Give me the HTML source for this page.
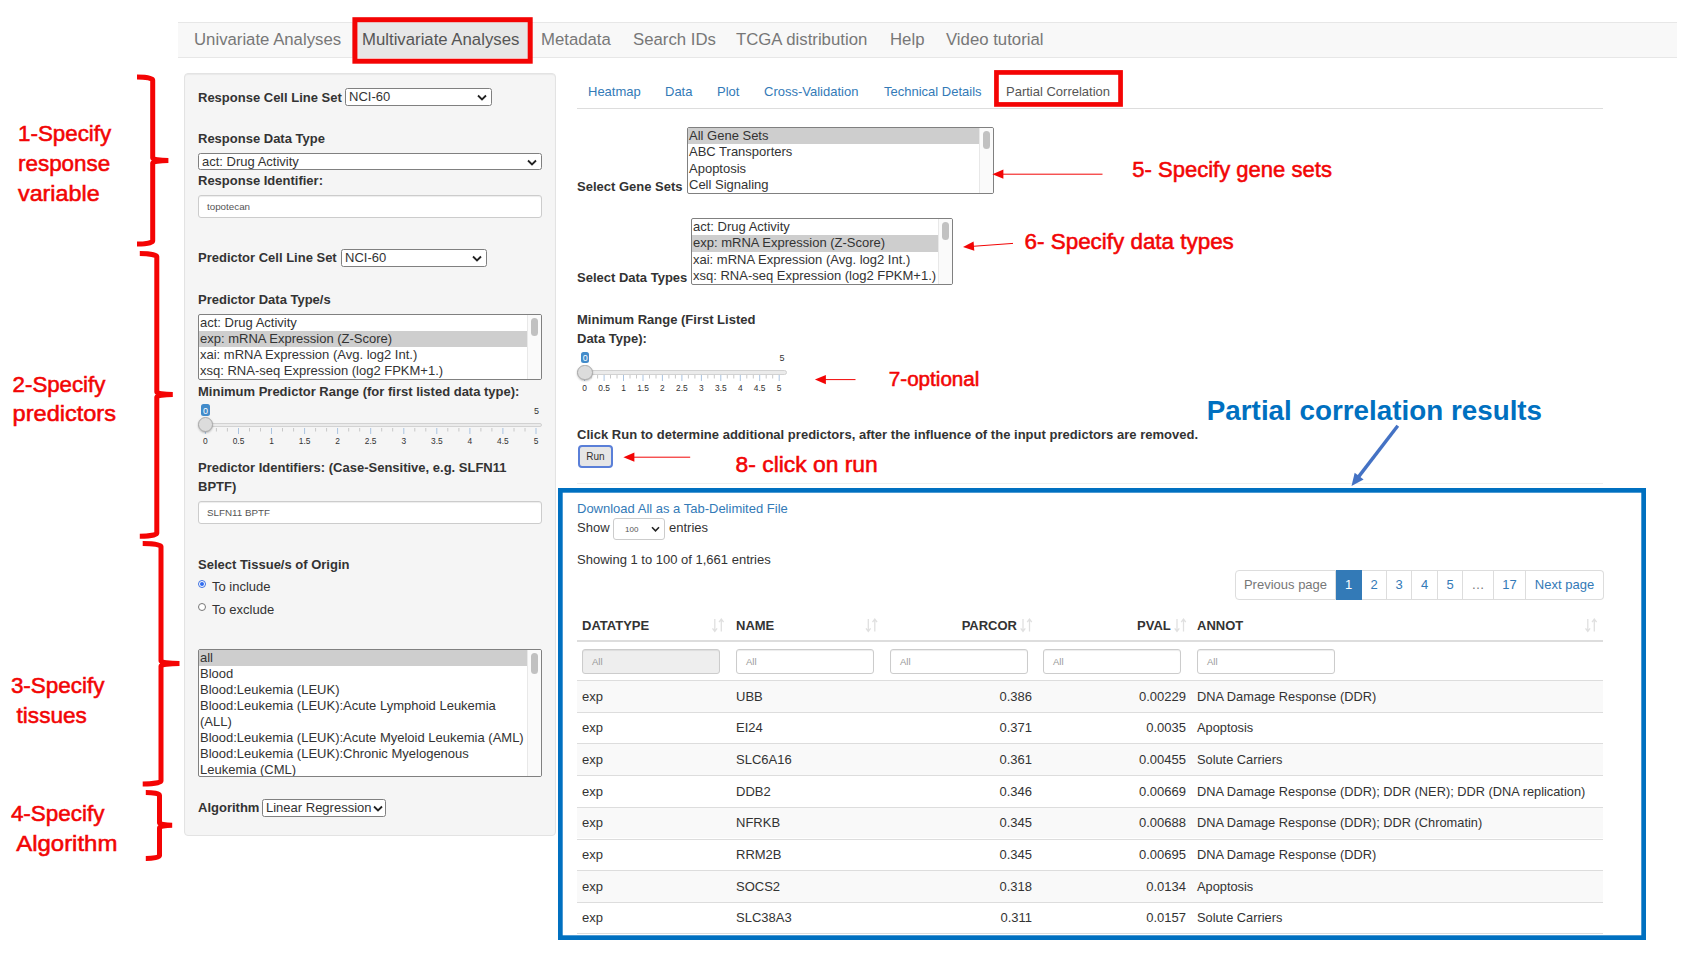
<!DOCTYPE html>
<html lang="en">
<head>
<meta charset="utf-8">
<title>Multivariate Analyses - Partial Correlation</title>
<style>
*{box-sizing:border-box;margin:0;padding:0}
html,body{width:1700px;height:956px;overflow:hidden;background:#fff}
body{font-family:"Liberation Sans",Arial,sans-serif;font-size:13px;color:#333;position:relative;line-height:1}
.abs{position:absolute;white-space:nowrap}
.b{font-weight:bold}
/* navbar */
#nav{position:absolute;left:178px;top:22px;width:1499px;height:36px;background:#f8f8f8;border-top:1px solid #e7e7e7;border-bottom:1px solid #e7e7e7}
#nav span{position:absolute;top:0;height:34px;line-height:34px;font-size:16.75px;color:#777;white-space:nowrap}
#nav span.act{background:#e7e7e7;color:#555}
.redbox{position:absolute;border:4px solid #e8000d}
/* sidebar */
#well{position:absolute;left:184px;top:73px;width:372px;height:763px;background:#f5f5f5;border:1px solid #e3e3e3;border-radius:4px;box-shadow:inset 0 1px 1px rgba(0,0,0,.05)}
.lbl{position:absolute;font-weight:bold;font-size:13px;color:#333;white-space:nowrap;line-height:16px}
.sel{position:absolute;background:#fff;border:1px solid #808080;border-radius:2.5px;font-size:13px;color:#333;line-height:16px;padding-left:3px;white-space:nowrap}
.sel svg{position:absolute;right:4px;top:5px}
.inp{position:absolute;background:#fff;border:1px solid #ccc;border-radius:3px;font-size:9.8px;color:#555;padding-left:8px;white-space:nowrap;box-shadow:inset 0 1px 1px rgba(0,0,0,.075)}
.list{position:absolute;background:#fff;border:1px solid #808080;border-radius:2px;font-size:13px;color:#333;overflow:hidden}
.list div{padding-left:1px;line-height:16px;white-space:nowrap}
.list div.s{background:#cecece}
.list i{position:absolute;right:0;top:0;bottom:0;width:14px;background:#fafafa;border-left:1px solid #e8e8e8}
.list.tl i:after{height:21px}
.list.ml div{line-height:16.4px}
.list i:after{content:"";position:absolute;left:3px;top:3px;width:7px;height:18px;border-radius:4px;background:#c1c1c1}
/* slider */
.trk{position:absolute;height:4.6px;background:#ebebeb;border:1px solid #d2d2d2;border-radius:3px}
.hnd{position:absolute;z-index:3;width:15.5px;height:15.5px;border-radius:50%;background:#dcdcdc;border:1px solid #ababab;box-shadow:0 1px 2px rgba(0,0,0,.25)}
.sv{position:absolute;background:#428bca;color:#fff;font-size:9px;height:11.5px;line-height:10px;border-radius:2.5px;padding:1.2px 1.7px 0}
.sm{position:absolute;font-size:9px;color:#333;line-height:10px}
.tk{position:absolute;font-size:8.4px;color:#333;line-height:10px;transform:translateX(-50%)}
/* main */
.tab{position:absolute;top:84px;font-size:13px;color:#337ab7;line-height:15px;white-space:nowrap}
.hr{position:absolute;height:1px;background:#e2e2e2}
.t13{position:absolute;font-size:13px;line-height:15px;white-space:nowrap;color:#333}
.lnk{color:#337ab7}
/* table */
.th{position:absolute;top:618px;font-size:13px;font-weight:bold;line-height:15px;color:#333;white-space:nowrap}
.row{position:absolute;left:577px;width:1026px;height:32px;border-top:1px solid #ddd}
.row.o{background:#f9f9f9}
.row span{position:absolute;top:7.6px;font-size:13px;line-height:15px;white-space:nowrap;color:#333}
.row span.r{text-align:right}
.fi{position:absolute;top:649px;height:25px;width:137.5px;background:#fff;border:1px solid #ccc;border-radius:3px;font-size:9.5px;color:#999;line-height:24px;padding-left:9px;box-shadow:inset 0 1px 1px rgba(0,0,0,.075)}
.pg{position:absolute;top:570px;height:29.5px;border:1px solid #ddd;border-left:none;background:#fff;font-size:13px;line-height:28px;color:#337ab7;text-align:center;white-space:nowrap}
svg.ov{position:absolute;left:0;top:0;width:1700px;height:956px;pointer-events:none}
</style>
</head>
<body>

<!-- NAVBAR -->
<div id="nav">
<span style="left:16px">Univariate Analyses</span>
<span class="act" style="left:174px;width:179px;padding-left:10px">Multivariate Analyses</span>
<span style="left:363px">Metadata</span>
<span style="left:455px">Search IDs</span>
<span style="left:558px">TCGA distribution</span>
<span style="left:712px">Help</span>
<span style="left:768px">Video tutorial</span>
</div>

<!-- SIDEBAR -->
<div id="well"></div>
<!--SIDEBAR-CONTENT-->
<div class="lbl" style="left:198px;top:89.5px">Response Cell Line Set</div>
<div class="sel" style="left:345px;top:88px;width:147px;height:18px">NCI-60<svg width="10" height="8" viewBox="0 0 10 8"><path d="M1 1.5 L5 5.5 L9 1.5" fill="none" stroke="#222" stroke-width="1.8"/></svg></div>
<div class="lbl" style="left:198px;top:131px">Response Data Type</div>
<div class="sel" style="left:198px;top:153.3px;width:344px;height:17.2px;line-height:15.4px">act: Drug Activity<svg width="10" height="8" viewBox="0 0 10 8"><path d="M1 1.5 L5 5.5 L9 1.5" fill="none" stroke="#222" stroke-width="1.8"/></svg></div>
<div class="lbl" style="left:198px;top:173px">Response Identifier:</div>
<div class="inp" style="left:198px;top:194.5px;width:344px;height:23.5px;line-height:21.5px">topotecan</div>
<div class="lbl" style="left:198px;top:250px">Predictor Cell Line Set</div>
<div class="sel" style="left:341px;top:249px;width:146px;height:18px">NCI-60<svg width="10" height="8" viewBox="0 0 10 8"><path d="M1 1.5 L5 5.5 L9 1.5" fill="none" stroke="#222" stroke-width="1.8"/></svg></div>
<div class="lbl" style="left:198px;top:292px">Predictor Data Type/s</div>
<div class="list" style="left:198px;top:314px;width:344px;height:66px">
<div>act: Drug Activity</div><div class="s">exp: mRNA Expression (Z-Score)</div><div>xai: mRNA Expression (Avg. log2 Int.)</div><div>xsq: RNA-seq Expression (log2 FPKM+1.)</div><i></i>
</div>
<div class="lbl" style="left:198px;top:384px">Minimum Predictor Range (for first listed data type):</div>
<!-- slider 1 -->
<div class="sv" style="left:201.4px;top:404.4px">0</div>
<div class="sm" style="left:534px;top:406px">5</div>
<div class="trk" style="left:198px;top:422.5px;width:344px"></div>
<div class="hnd" style="left:197.8px;top:416.8px"></div>
<!--TICKS1-->
<div class="lbl" style="left:198px;top:460px">Predictor Identifiers: (Case-Sensitive, e.g. SLFN11</div>
<div class="lbl" style="left:198px;top:479px">BPTF)</div>
<div class="inp" style="left:198px;top:500.5px;width:344px;height:23.5px;line-height:21.5px">SLFN11 BPTF</div>
<div class="lbl" style="left:198px;top:557px">Select Tissue/s of Origin</div>
<div class="abs" style="left:198px;top:580px;width:8px;height:8px;border-radius:50%;border:1px solid #3b6fe0;background:#fff"><div style="position:absolute;left:1px;top:1px;width:4px;height:4px;border-radius:50%;background:#2f6bf0"></div></div>
<div class="t13" style="left:212px;top:579.4px">To include</div>
<div class="abs" style="left:198px;top:603px;width:8px;height:8px;border-radius:50%;border:1px solid #777;background:#fff"></div>
<div class="t13" style="left:212px;top:602.4px">To exclude</div>
<div class="list tl" style="left:198px;top:649px;width:344px;height:128px">
<div class="s">all</div><div>Blood</div><div>Blood:Leukemia (LEUK)</div><div>Blood:Leukemia (LEUK):Acute Lymphoid Leukemia</div><div>(ALL)</div><div>Blood:Leukemia (LEUK):Acute Myeloid Leukemia (AML)</div><div>Blood:Leukemia (LEUK):Chronic Myelogenous</div><div>Leukemia (CML)</div><i></i>
</div>
<div class="lbl" style="left:198px;top:800px">Algorithm</div>
<div class="sel" style="left:262px;top:799px;width:124px;height:18px">Linear Regression<svg width="10" height="8" viewBox="0 0 10 8" style="right:2px"><path d="M1 1.5 L5 5.5 L9 1.5" fill="none" stroke="#222" stroke-width="1.8"/></svg></div>


<!--MAIN-CONTENT-->
<div class="tab" style="left:588px">Heatmap</div>
<div class="tab" style="left:665px">Data</div>
<div class="tab" style="left:717px">Plot</div>
<div class="tab" style="left:764px">Cross-Validation</div>
<div class="tab" style="left:884px">Technical Details</div>
<div class="tab" style="left:1006px;color:#555">Partial Correlation</div>
<div class="hr" style="left:577px;top:107.5px;width:1026px;background:#ddd"></div>
<div class="lbl" style="left:577px;top:179px">Select Gene Sets</div>
<div class="list ml" style="left:687px;top:127px;width:307px;height:67px"><div class="s">All Gene Sets</div><div>ABC Transporters</div><div>Apoptosis</div><div>Cell Signaling</div><i></i></div>
<div class="lbl" style="left:577px;top:270px">Select Data Types</div>
<div class="list ml" style="left:691px;top:218px;width:262px;height:67px"><div>act: Drug Activity</div><div class="s">exp: mRNA Expression (Z-Score)</div><div>xai: mRNA Expression (Avg. log2 Int.)</div><div>xsq: RNA-seq Expression (log2 FPKM+1.)</div><i></i></div>
<div class="lbl" style="left:577px;top:312px">Minimum Range (First Listed</div>
<div class="lbl" style="left:577px;top:331.4px">Data Type):</div>
<!-- slider 2 -->
<div class="sv" style="left:581px;top:351.9px;height:11px">0</div>
<div class="sm" style="left:779.5px;top:353.4px">5</div>
<div class="trk" style="left:577px;top:370.2px;width:210px"></div>
<div class="hnd" style="left:577px;top:364.8px"></div>
<!--TICKS2-->
<div class="lbl" style="left:577px;top:427px;letter-spacing:0.02px">Click Run to determine additional predictors, after the influence of the input predictors are removed.</div>
<div class="abs" style="left:578px;top:445px;width:35px;height:23px;border:2px solid #5a7fd8;border-radius:4px;background:#e6e6e6;font-size:10px;line-height:19px;text-align:center;color:#333">Run</div>
<div class="hr" style="left:577px;top:483px;width:1026px;background:#eee"></div>
<div class="t13 lnk" style="left:577px;top:501px">Download All as a Tab-Delimited File</div>
<div class="t13" style="left:577px;top:520px">Show</div>
<div class="abs" style="left:613px;top:518px;width:52px;height:22px;border:1px solid #ccc;border-radius:3px;background:#fff;font-size:8px;line-height:21px;padding-left:11px;color:#555">100<svg width="9" height="7" viewBox="0 0 10 8" style="position:absolute;right:4px;top:7px"><path d="M1 1.5 L5 5.5 L9 1.5" fill="none" stroke="#222" stroke-width="1.8"/></svg></div>
<div class="t13" style="left:669px;top:520px">entries</div>
<div class="t13" style="left:577px;top:552px">Showing 1 to 100 of 1,661 entries</div>
<div class="pg" style="left:1235px;width:101px;border-left:1px solid #ddd;border-radius:4px 0 0 4px;color:#777;">Previous page</div>
<div class="pg" style="left:1336px;width:26px;background:#337ab7;border-color:#337ab7;color:#fff;">1</div>
<div class="pg" style="left:1362px;width:25px;">2</div>
<div class="pg" style="left:1387px;width:25px;">3</div>
<div class="pg" style="left:1412px;width:26px;">4</div>
<div class="pg" style="left:1438px;width:25px;">5</div>
<div class="pg" style="left:1463px;width:31px;color:#777;">…</div>
<div class="pg" style="left:1494px;width:32px;">17</div>
<div class="pg" style="left:1526px;width:78px;border-radius:0 4px 4px 0;">Next page</div>
<div class="th" style="left:582px">DATATYPE</div>
<div class="th" style="left:736px">NAME</div>
<div class="th" style="left:917px;width:100px;text-align:right">PARCOR</div>
<div class="th" style="left:1070.8px;width:100px;text-align:right">PVAL</div>
<div class="th" style="left:1197px">ANNOT</div>
<div class="hr" style="left:577px;top:640px;width:1026px;height:2px;background:#ddd"></div>
<div class="fi" style="left:582px;background:#eee">All</div>
<div class="fi" style="left:736px">All</div>
<div class="fi" style="left:890px">All</div>
<div class="fi" style="left:1043px">All</div>
<div class="fi" style="left:1197px">All</div>
<div class="row o" style="top:680.0px;height:31.7px"><span style="left:5px">exp</span><span style="left:159px">UBB</span><span class="r" style="left:355px;width:100px">0.386</span><span class="r" style="left:509px;width:100px">0.00229</span><span style="left:620px;font-size:12.8px">DNA Damage Response (DDR)</span></div>
<div class="row" style="top:711.7px;height:31.7px"><span style="left:5px">exp</span><span style="left:159px">EI24</span><span class="r" style="left:355px;width:100px">0.371</span><span class="r" style="left:509px;width:100px">0.0035</span><span style="left:620px;font-size:12.8px">Apoptosis</span></div>
<div class="row o" style="top:743.4px;height:31.7px"><span style="left:5px">exp</span><span style="left:159px">SLC6A16</span><span class="r" style="left:355px;width:100px">0.361</span><span class="r" style="left:509px;width:100px">0.00455</span><span style="left:620px;font-size:12.8px">Solute Carriers</span></div>
<div class="row" style="top:775.1px;height:31.7px"><span style="left:5px">exp</span><span style="left:159px">DDB2</span><span class="r" style="left:355px;width:100px">0.346</span><span class="r" style="left:509px;width:100px">0.00669</span><span style="left:620px;font-size:12.8px">DNA Damage Response (DDR); DDR (NER); DDR (DNA replication)</span></div>
<div class="row o" style="top:806.8px;height:31.7px"><span style="left:5px">exp</span><span style="left:159px">NFRKB</span><span class="r" style="left:355px;width:100px">0.345</span><span class="r" style="left:509px;width:100px">0.00688</span><span style="left:620px;font-size:12.8px">DNA Damage Response (DDR); DDR (Chromatin)</span></div>
<div class="row" style="top:838.5px;height:31.7px"><span style="left:5px">exp</span><span style="left:159px">RRM2B</span><span class="r" style="left:355px;width:100px">0.345</span><span class="r" style="left:509px;width:100px">0.00695</span><span style="left:620px;font-size:12.8px">DNA Damage Response (DDR)</span></div>
<div class="row o" style="top:870.2px;height:31.7px"><span style="left:5px">exp</span><span style="left:159px">SOCS2</span><span class="r" style="left:355px;width:100px">0.318</span><span class="r" style="left:509px;width:100px">0.0134</span><span style="left:620px;font-size:12.8px">Apoptosis</span></div>
<div class="row" style="top:901.9px;height:31.7px"><span style="left:5px">exp</span><span style="left:159px">SLC38A3</span><span class="r" style="left:355px;width:100px">0.311</span><span class="r" style="left:509px;width:100px">0.0157</span><span style="left:620px;font-size:12.8px">Solute Carriers</span></div>
<div class="hr" style="left:577px;top:933.4px;width:1026px;background:#ddd"></div>

<!--OVERLAY-->
<svg class="ov" viewBox="0 0 1700 956">
<g fill="none" stroke="#f40404">
<rect x="354.9" y="19.7" width="175.3" height="41.5" stroke-width="5"/>
<rect x="996.45" y="72.45" width="124.1" height="32" stroke-width="4.7"/>
</g>
<g fill="none" stroke="#f40404" stroke-width="5">
<path d="M137 77 A15.7 3 0 0 1 152.7 80 L152.7 157.9 A15.7 2.6 0 0 0 168.4 160.5 A15.7 2.6 0 0 0 152.7 163.1 L152.7 241 A15.7 3 0 0 1 137 244"/>
<path d="M139.8 253.6 A17.0 3 0 0 1 156.8 256.6 L156.8 391.9 A16.0 2.6 0 0 0 172.8 394.5 A16.0 2.6 0 0 0 156.8 397.1 L156.8 533.2 A17.0 3 0 0 1 139.8 536.2"/>
<path d="M142.7 543.5 A18.3 3 0 0 1 161 546.5 L161 660.9 A18.5 2.6 0 0 0 179.5 663.5 A18.5 2.6 0 0 0 161 666.1 L161 780.9 A18.3 3 0 0 1 142.7 783.9"/>
<path d="M145.8 792.4 A13.7 3 0 0 1 159.5 795.4 L159.5 822.6999999999999 A12.7 2.6 0 0 0 172.2 825.3 A12.7 2.6 0 0 0 159.5 827.9 L159.5 855.5 A13.7 3 0 0 1 145.8 858.5"/>
</g>
<g fill="#f20505" stroke="#f20505" stroke-width="0.55" font-family="'Liberation Sans',Arial,sans-serif" font-size="22.4">
<text x="18.0" y="140.5" textLength="93.2" lengthAdjust="spacingAndGlyphs">1-Specify</text>
<text x="18.0" y="170.5" textLength="92.2" lengthAdjust="spacingAndGlyphs">response</text>
<text x="18.0" y="200.6" textLength="81.6" lengthAdjust="spacingAndGlyphs">variable</text>
<text x="12.6" y="391.7" textLength="92.8" lengthAdjust="spacingAndGlyphs">2-Specify</text>
<text x="12.6" y="421" textLength="103.4" lengthAdjust="spacingAndGlyphs">predictors</text>
<text x="10.9" y="692.6" textLength="93.5" lengthAdjust="spacingAndGlyphs">3-Specify</text>
<text x="16.6" y="722.5" textLength="70.2" lengthAdjust="spacingAndGlyphs">tissues</text>
<text x="10.9" y="821.3" textLength="93.5" lengthAdjust="spacingAndGlyphs">4-Specify</text>
<text x="16.2" y="850.6" textLength="101.2" lengthAdjust="spacingAndGlyphs">Algorithm</text>
<text x="1132.3" y="176.9" textLength="199.6" lengthAdjust="spacingAndGlyphs">5- Specify gene sets</text>
<text x="1024.6" y="249.3" textLength="209.2" lengthAdjust="spacingAndGlyphs">6- Specify data types</text>
<text x="888.8" y="386" textLength="90.6" lengthAdjust="spacingAndGlyphs" font-size="19.5">7-optional</text>
<text x="735.6" y="471.5" textLength="142.1" lengthAdjust="spacingAndGlyphs">8- click on run</text>
</g>
<line x1="1102.5" y1="174.2" x2="1002.4" y2="174.2" stroke="#f20505" stroke-width="1"/>
<polygon points="992.4,174.2 1003.4,169.6 1003.4,178.8" fill="#f20505"/>
<line x1="1013" y1="243.4" x2="973.0" y2="246.3" stroke="#f20505" stroke-width="1"/>
<polygon points="963.0,247.0 973.6,241.6 974.3,250.8" fill="#f20505"/>
<line x1="855.5" y1="379.6" x2="824.9" y2="379.6" stroke="#f20505" stroke-width="1"/>
<polygon points="814.9,379.6 825.9,375.0 825.9,384.2" fill="#f20505"/>
<line x1="690.2" y1="457.2" x2="633.4" y2="457.2" stroke="#f20505" stroke-width="1"/>
<polygon points="623.4,457.2 634.4,452.6 634.4,461.8" fill="#f20505"/>
<rect x="560.35" y="490.35" width="1083.3" height="447.3" fill="none" stroke="#0070c0" stroke-width="4.7"/>
<text x="1206.8" y="419.6" textLength="335.3" lengthAdjust="spacingAndGlyphs" font-family="'Liberation Sans',Arial,sans-serif" font-weight="bold" font-size="27.4" fill="#0070c0">Partial correlation results</text>
<line x1="1397.8" y1="425.7" x2="1358.5" y2="476.9" stroke="#4472c4" stroke-width="3.4"/>
<polygon points="1351.5,486.0 1354.7,472.7 1363.6,479.5" fill="#4472c4"/>
<path d="M714.8 619 V631.5 M712.5 628.3 L714.8 631.5 L717.0999999999999 628.3 M721.3 631.5 V619 M719.0 622.2 L721.3 619 L723.5999999999999 622.2" fill="none" stroke="#e0e0e0" stroke-width="1.3"/>
<path d="M868.3 619 V631.5 M866.0 628.3 L868.3 631.5 L870.5999999999999 628.3 M874.8 631.5 V619 M872.5 622.2 L874.8 619 L877.0999999999999 622.2" fill="none" stroke="#e0e0e0" stroke-width="1.3"/>
<path d="M1023 619 V631.5 M1020.7 628.3 L1023 631.5 L1025.3 628.3 M1029.5 631.5 V619 M1027.2 622.2 L1029.5 619 L1031.8 622.2" fill="none" stroke="#e0e0e0" stroke-width="1.3"/>
<path d="M1177 619 V631.5 M1174.7 628.3 L1177 631.5 L1179.3 628.3 M1183.5 631.5 V619 M1181.2 622.2 L1183.5 619 L1185.8 622.2" fill="none" stroke="#e0e0e0" stroke-width="1.3"/>
<path d="M1587.8 619 V631.5 M1585.5 628.3 L1587.8 631.5 L1590.1 628.3 M1594.3 631.5 V619 M1592.0 622.2 L1594.3 619 L1596.6 622.2" fill="none" stroke="#e0e0e0" stroke-width="1.3"/>
<line x1="205.4" y1="428" x2="205.4" y2="434" stroke="#a9c3e0" stroke-width="1"/>
<line x1="216.4" y1="428" x2="216.4" y2="431.5" stroke="#c8c8c8" stroke-width="1"/>
<line x1="227.4" y1="428" x2="227.4" y2="431.5" stroke="#c8c8c8" stroke-width="1"/>
<line x1="238.5" y1="428" x2="238.5" y2="434" stroke="#a9c3e0" stroke-width="1"/>
<line x1="249.5" y1="428" x2="249.5" y2="431.5" stroke="#c8c8c8" stroke-width="1"/>
<line x1="260.5" y1="428" x2="260.5" y2="431.5" stroke="#c8c8c8" stroke-width="1"/>
<line x1="271.5" y1="428" x2="271.5" y2="434" stroke="#a9c3e0" stroke-width="1"/>
<line x1="282.5" y1="428" x2="282.5" y2="431.5" stroke="#c8c8c8" stroke-width="1"/>
<line x1="293.6" y1="428" x2="293.6" y2="431.5" stroke="#c8c8c8" stroke-width="1"/>
<line x1="304.6" y1="428" x2="304.6" y2="434" stroke="#a9c3e0" stroke-width="1"/>
<line x1="315.6" y1="428" x2="315.6" y2="431.5" stroke="#c8c8c8" stroke-width="1"/>
<line x1="326.6" y1="428" x2="326.6" y2="431.5" stroke="#c8c8c8" stroke-width="1"/>
<line x1="337.6" y1="428" x2="337.6" y2="434" stroke="#a9c3e0" stroke-width="1"/>
<line x1="348.7" y1="428" x2="348.7" y2="431.5" stroke="#c8c8c8" stroke-width="1"/>
<line x1="359.7" y1="428" x2="359.7" y2="431.5" stroke="#c8c8c8" stroke-width="1"/>
<line x1="370.7" y1="428" x2="370.7" y2="434" stroke="#a9c3e0" stroke-width="1"/>
<line x1="381.7" y1="428" x2="381.7" y2="431.5" stroke="#c8c8c8" stroke-width="1"/>
<line x1="392.7" y1="428" x2="392.7" y2="431.5" stroke="#c8c8c8" stroke-width="1"/>
<line x1="403.8" y1="428" x2="403.8" y2="434" stroke="#a9c3e0" stroke-width="1"/>
<line x1="414.8" y1="428" x2="414.8" y2="431.5" stroke="#c8c8c8" stroke-width="1"/>
<line x1="425.8" y1="428" x2="425.8" y2="431.5" stroke="#c8c8c8" stroke-width="1"/>
<line x1="436.8" y1="428" x2="436.8" y2="434" stroke="#a9c3e0" stroke-width="1"/>
<line x1="447.8" y1="428" x2="447.8" y2="431.5" stroke="#c8c8c8" stroke-width="1"/>
<line x1="458.9" y1="428" x2="458.9" y2="431.5" stroke="#c8c8c8" stroke-width="1"/>
<line x1="469.9" y1="428" x2="469.9" y2="434" stroke="#a9c3e0" stroke-width="1"/>
<line x1="480.9" y1="428" x2="480.9" y2="431.5" stroke="#c8c8c8" stroke-width="1"/>
<line x1="491.9" y1="428" x2="491.9" y2="431.5" stroke="#c8c8c8" stroke-width="1"/>
<line x1="502.9" y1="428" x2="502.9" y2="434" stroke="#a9c3e0" stroke-width="1"/>
<line x1="514.0" y1="428" x2="514.0" y2="431.5" stroke="#c8c8c8" stroke-width="1"/>
<line x1="525.0" y1="428" x2="525.0" y2="431.5" stroke="#c8c8c8" stroke-width="1"/>
<line x1="536.0" y1="428" x2="536.0" y2="434" stroke="#a9c3e0" stroke-width="1"/>
<line x1="584.6" y1="375" x2="584.6" y2="381" stroke="#a9c3e0" stroke-width="1"/>
<line x1="591.1" y1="375" x2="591.1" y2="378.5" stroke="#c8c8c8" stroke-width="1"/>
<line x1="597.6" y1="375" x2="597.6" y2="378.5" stroke="#c8c8c8" stroke-width="1"/>
<line x1="604.1" y1="375" x2="604.1" y2="381" stroke="#a9c3e0" stroke-width="1"/>
<line x1="610.5" y1="375" x2="610.5" y2="378.5" stroke="#c8c8c8" stroke-width="1"/>
<line x1="617.0" y1="375" x2="617.0" y2="378.5" stroke="#c8c8c8" stroke-width="1"/>
<line x1="623.5" y1="375" x2="623.5" y2="381" stroke="#a9c3e0" stroke-width="1"/>
<line x1="630.0" y1="375" x2="630.0" y2="378.5" stroke="#c8c8c8" stroke-width="1"/>
<line x1="636.5" y1="375" x2="636.5" y2="378.5" stroke="#c8c8c8" stroke-width="1"/>
<line x1="643.0" y1="375" x2="643.0" y2="381" stroke="#a9c3e0" stroke-width="1"/>
<line x1="649.5" y1="375" x2="649.5" y2="378.5" stroke="#c8c8c8" stroke-width="1"/>
<line x1="656.0" y1="375" x2="656.0" y2="378.5" stroke="#c8c8c8" stroke-width="1"/>
<line x1="662.4" y1="375" x2="662.4" y2="381" stroke="#a9c3e0" stroke-width="1"/>
<line x1="668.9" y1="375" x2="668.9" y2="378.5" stroke="#c8c8c8" stroke-width="1"/>
<line x1="675.4" y1="375" x2="675.4" y2="378.5" stroke="#c8c8c8" stroke-width="1"/>
<line x1="681.9" y1="375" x2="681.9" y2="381" stroke="#a9c3e0" stroke-width="1"/>
<line x1="688.4" y1="375" x2="688.4" y2="378.5" stroke="#c8c8c8" stroke-width="1"/>
<line x1="694.9" y1="375" x2="694.9" y2="378.5" stroke="#c8c8c8" stroke-width="1"/>
<line x1="701.4" y1="375" x2="701.4" y2="381" stroke="#a9c3e0" stroke-width="1"/>
<line x1="707.8" y1="375" x2="707.8" y2="378.5" stroke="#c8c8c8" stroke-width="1"/>
<line x1="714.3" y1="375" x2="714.3" y2="378.5" stroke="#c8c8c8" stroke-width="1"/>
<line x1="720.8" y1="375" x2="720.8" y2="381" stroke="#a9c3e0" stroke-width="1"/>
<line x1="727.3" y1="375" x2="727.3" y2="378.5" stroke="#c8c8c8" stroke-width="1"/>
<line x1="733.8" y1="375" x2="733.8" y2="378.5" stroke="#c8c8c8" stroke-width="1"/>
<line x1="740.3" y1="375" x2="740.3" y2="381" stroke="#a9c3e0" stroke-width="1"/>
<line x1="746.8" y1="375" x2="746.8" y2="378.5" stroke="#c8c8c8" stroke-width="1"/>
<line x1="753.3" y1="375" x2="753.3" y2="378.5" stroke="#c8c8c8" stroke-width="1"/>
<line x1="759.7" y1="375" x2="759.7" y2="381" stroke="#a9c3e0" stroke-width="1"/>
<line x1="766.2" y1="375" x2="766.2" y2="378.5" stroke="#c8c8c8" stroke-width="1"/>
<line x1="772.7" y1="375" x2="772.7" y2="378.5" stroke="#c8c8c8" stroke-width="1"/>
<line x1="779.2" y1="375" x2="779.2" y2="381" stroke="#a9c3e0" stroke-width="1"/>
</svg>
<div class="tk" style="left:205.4px;top:436px">0</div>
<div class="tk" style="left:238.5px;top:436px">0.5</div>
<div class="tk" style="left:271.5px;top:436px">1</div>
<div class="tk" style="left:304.6px;top:436px">1.5</div>
<div class="tk" style="left:337.6px;top:436px">2</div>
<div class="tk" style="left:370.7px;top:436px">2.5</div>
<div class="tk" style="left:403.8px;top:436px">3</div>
<div class="tk" style="left:436.8px;top:436px">3.5</div>
<div class="tk" style="left:469.9px;top:436px">4</div>
<div class="tk" style="left:502.9px;top:436px">4.5</div>
<div class="tk" style="left:536.0px;top:436px">5</div>
<div class="tk" style="left:584.6px;top:383px">0</div>
<div class="tk" style="left:604.1px;top:383px">0.5</div>
<div class="tk" style="left:623.5px;top:383px">1</div>
<div class="tk" style="left:643.0px;top:383px">1.5</div>
<div class="tk" style="left:662.4px;top:383px">2</div>
<div class="tk" style="left:681.9px;top:383px">2.5</div>
<div class="tk" style="left:701.4px;top:383px">3</div>
<div class="tk" style="left:720.8px;top:383px">3.5</div>
<div class="tk" style="left:740.3px;top:383px">4</div>
<div class="tk" style="left:759.7px;top:383px">4.5</div>
<div class="tk" style="left:779.2px;top:383px">5</div>
</body>
</html>
